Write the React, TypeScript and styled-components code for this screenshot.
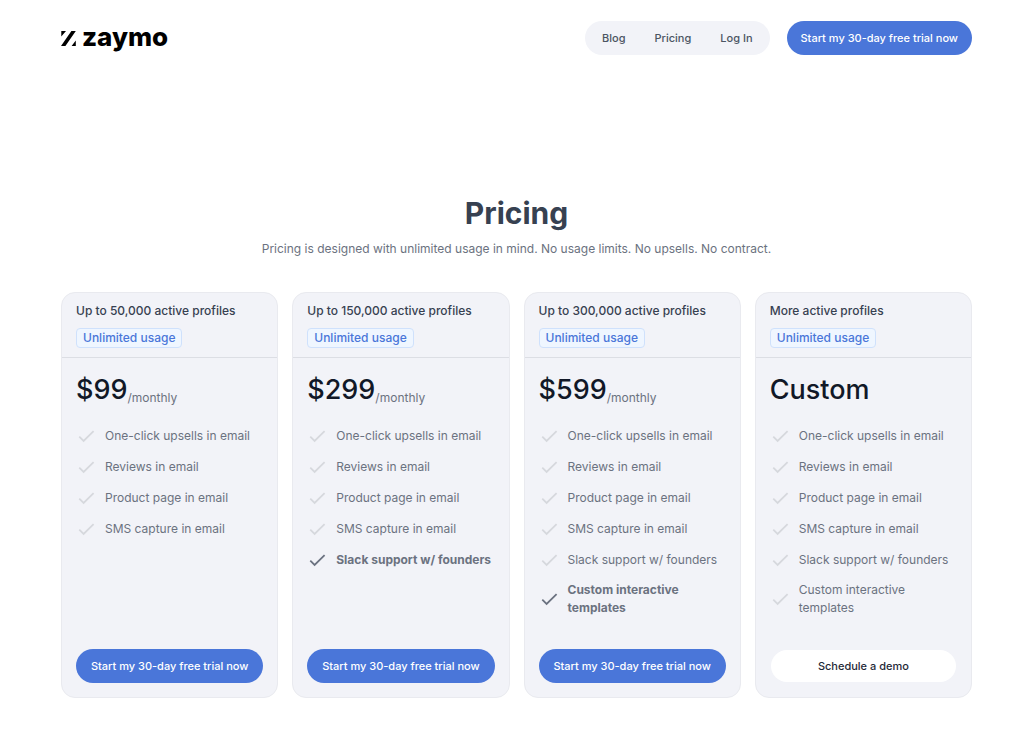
import React from "react";
import styled, { createGlobalStyle } from "styled-components";

const GlobalStyle = createGlobalStyle`
  *, *::before, *::after { box-sizing: border-box; }
  body {
    margin: 0;
    background: #fff;
    color: #374151;
    font-family: Inter, "Liberation Sans", sans-serif;
    font-size: 12px;
    line-height: 18px;
    -webkit-font-smoothing: antialiased;
  }
`;

const Page = styled.div`
  padding: 21px 52px 38px 61px;
`;

const Header = styled.header`
  display: flex;
  align-items: center;
  justify-content: space-between;
`;

const LogoLink = styled.a`
  display: flex;
  align-items: baseline;
  gap: 6px;
  padding-bottom: 2px;
  color: #000;
  font-size: 26px;
  font-weight: 800;
  line-height: 32px;
  text-decoration: none;
`;

const HeaderActions = styled.div`
  display: flex;
  gap: 17px;
`;

const Nav = styled.nav`
  display: flex;
  align-items: center;
  gap: 29px;
  padding: 0 17px;
  border-radius: 17px;
  background: #f2f3f8;
  font-size: 11px;
`;

const NavLink = styled.a`
  color: #4b5563;
  font-weight: 500;
  text-decoration: none;
`;

const PillButton = styled.button<{ $light?: boolean }>`
  height: ${(p) => (p.$light ? 32 : 34)}px;
  margin: ${(p) => (p.$light ? "1px" : "0")};
  padding: 0 14px;
  border: 0;
  border-radius: 17px;
  background: ${(p) => (p.$light ? "#fff" : "#4a76d9")};
  color: ${(p) => (p.$light ? "#1f2937" : "#fff")};
  font: inherit;
  font-size: 11px;
  font-weight: 500;
  white-space: nowrap;
  cursor: pointer;
`;

const Intro = styled.section`
  margin: 138px 0 34px;
  text-align: center;
`;

const Title = styled.h1`
  margin: 0 0 7px;
  color: #374151;
  font-size: 30px;
  font-weight: 700;
  line-height: 40px;
`;

const Subtitle = styled.p`
  margin: 0;
  color: #6b7280;
`;

const Plans = styled.main`
  display: grid;
  grid-template-columns: repeat(4, minmax(0, 1fr));
  gap: 14px;
`;

const Card = styled.article`
  display: flex;
  flex-direction: column;
  border: 1px solid #e9eaef;
  border-radius: 14px;
  background: #f2f3f8;
`;

const CardHead = styled.div`
  display: flex;
  flex-direction: column;
  align-items: flex-start;
  gap: 8px;
  padding: 9px 14px;
  border-bottom: 1px solid #dcdee4;
`;

const PlanName = styled.h2`
  margin: 0;
  color: #374151;
  font-size: 12px;
  font-weight: 500;
  line-height: 18px;
`;

const Badge = styled.span`
  padding: 0 6px;
  border: 1px solid #cfe1fc;
  border-radius: 4px;
  background: #eff6ff;
  color: #4a76d9;
  font-weight: 500;
`;

const CardBody = styled.div`
  display: flex;
  flex: 1;
  flex-direction: column;
  padding: 15px 14px 14px;
`;

const Price = styled.p`
  display: flex;
  align-items: flex-end;
  margin: 0 0 19px;
  color: #111827;
  font-size: 27px;
  font-weight: 500;
  line-height: 34px;
`;

const Period = styled.span`
  color: #6b7280;
  font-size: 12px;
  font-weight: 400;
  line-height: 18px;
`;

const Features = styled.ul`
  display: flex;
  flex-direction: column;
  gap: 11px;
  margin: 0 0 32px;
  padding: 0;
  list-style: none;
`;

const Feature = styled.li<{ $strong?: boolean }>`
  display: flex;
  align-items: center;
  gap: 8px;
  min-height: 20px;
  color: #6b7280;
  font-weight: ${(p) => (p.$strong ? 700 : 400)};

  svg {
    flex: none;
    color: ${(p) => (p.$strong ? "#6b7280" : "#d6d8dd")};
  }
`;

const Action = styled.div`
  display: grid;
  margin-top: auto;
`;

const LogoMark = () => (
  <svg width="15" height="15" viewBox="0 0 15 15" fill="currentColor" aria-hidden="true">
    <path d="M0.3 0H5L0.3 5.4ZM10.4 0H14.8L4.4 15H0ZM14.8 9.6V15H10.6Z" />
  </svg>
);

const Check = () => (
  <svg width="21" height="20" viewBox="0 0 21 20" fill="none" stroke="currentColor" strokeWidth="1.8" aria-hidden="true">
    <path d="M3.3 10.7L7.6 14.9L17.6 5.2" />
  </svg>
);

const features = [
  "One-click upsells in email",
  "Reviews in email",
  "Product page in email",
  "SMS capture in email",
  "Slack support w/ founders",
  "Custom interactive templates",
];

const trial = "Start my 30-day free trial now";

const plans = [
  { name: "Up to 50,000 active profiles", price: "$99", count: 4, strong: -1 },
  { name: "Up to 150,000 active profiles", price: "$299", count: 5, strong: 4 },
  { name: "Up to 300,000 active profiles", price: "$599", count: 6, strong: 5 },
  { name: "More active profiles", price: "Custom", count: 6, strong: -1, custom: true },
];

export default function App() {
  return (
    <>
      <GlobalStyle />
      <Page>
        <Header>
          <LogoLink href="#">
            <LogoMark />
            zaymo
          </LogoLink>
          <HeaderActions>
            <Nav>
              <NavLink href="#blog">Blog</NavLink>
              <NavLink href="#pricing">Pricing</NavLink>
              <NavLink href="#login">Log In</NavLink>
            </Nav>
            <PillButton type="button">{trial}</PillButton>
          </HeaderActions>
        </Header>
        <Intro>
          <Title>Pricing</Title>
          <Subtitle>
            Pricing is designed with unlimited usage in mind. No usage limits. No upsells. No contract.
          </Subtitle>
        </Intro>
        <Plans>
          {plans.map((plan) => (
            <Card key={plan.name}>
              <CardHead>
                <PlanName>{plan.name}</PlanName>
                <Badge>Unlimited usage</Badge>
              </CardHead>
              <CardBody>
                <Price>
                  {plan.price}
                  {!plan.custom && <Period>/monthly</Period>}
                </Price>
                <Features>
                  {features.slice(0, plan.count).map((text, i) => (
                    <Feature key={text} $strong={i === plan.strong}>
                      <Check />
                      <span>{text}</span>
                    </Feature>
                  ))}
                </Features>
                <Action>
                  <PillButton type="button" $light={plan.custom}>
                    {plan.custom ? "Schedule a demo" : trial}
                  </PillButton>
                </Action>
              </CardBody>
            </Card>
          ))}
        </Plans>
      </Page>
    </>
  );
}
